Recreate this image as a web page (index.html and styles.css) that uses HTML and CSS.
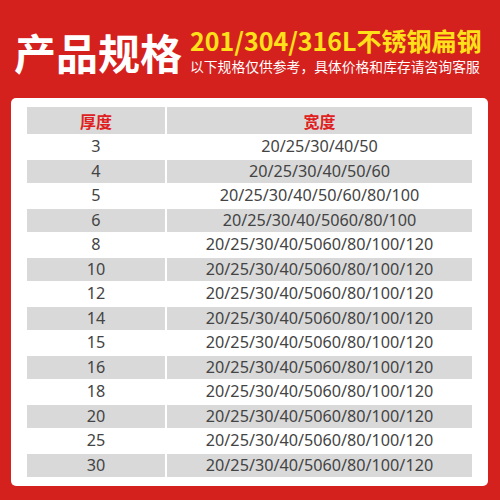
FILE: index.html
```html
<!DOCTYPE html>
<html lang="zh">
<head>
<meta charset="utf-8">
<link rel="stylesheet" href="styles.css">
</head>
<body>
<div class="page">
  <header class="head">
    <h1 class="title">产品规格</h1>
    <div class="info">
      <div class="product">201/304/316L不锈钢扁钢</div>
      <div class="note">以下规格仅供参考，具体价格和库存请咨询客服</div>
    </div>
  </header>
  <main class="card">
    <div class="table">
      <div class="row hd"><div class="c">厚度</div><div class="c">宽度</div></div>
      <div class="row"><div class="c">3</div><div class="c">20/25/30/40/50</div></div>
      <div class="row g"><div class="c">4</div><div class="c">20/25/30/40/50/60</div></div>
      <div class="row"><div class="c">5</div><div class="c">20/25/30/40/50/60/80/100</div></div>
      <div class="row g"><div class="c">6</div><div class="c">20/25/30/40/5060/80/100</div></div>
      <div class="row"><div class="c">8</div><div class="c">20/25/30/40/5060/80/100/120</div></div>
      <div class="row g"><div class="c">10</div><div class="c">20/25/30/40/5060/80/100/120</div></div>
      <div class="row"><div class="c">12</div><div class="c">20/25/30/40/5060/80/100/120</div></div>
      <div class="row g"><div class="c">14</div><div class="c">20/25/30/40/5060/80/100/120</div></div>
      <div class="row"><div class="c">15</div><div class="c">20/25/30/40/5060/80/100/120</div></div>
      <div class="row g"><div class="c">16</div><div class="c">20/25/30/40/5060/80/100/120</div></div>
      <div class="row"><div class="c">18</div><div class="c">20/25/30/40/5060/80/100/120</div></div>
      <div class="row g"><div class="c">20</div><div class="c">20/25/30/40/5060/80/100/120</div></div>
      <div class="row"><div class="c">25</div><div class="c">20/25/30/40/5060/80/100/120</div></div>
      <div class="row g"><div class="c">30</div><div class="c">20/25/30/40/5060/80/100/120</div></div>
    </div>
  </main>
</div>
</body>
</html>
```
FILE: styles.css
```css
html, body {
  margin: 0;
  padding: 0;
}
body {
  background: #d5211e;
  font-family: "Noto Sans", "Noto Sans CJK SC", sans-serif;
}
.page {
  width: 500px;
  height: 500px;
  overflow: hidden;
  padding-top: 28px;
  box-sizing: border-box;
}
.head {
  display: flex;
  align-items: center;
  padding-left: 14px;
  gap: 8px;
  height: 48px;
}
.title {
  margin: 0;
  font-family: "Noto Sans CJK SC", sans-serif;
  font-weight: 700;
  font-size: 42px;
  line-height: 1;
  color: #fff;
}
.info {
  align-self: flex-start;
  margin-top: -1px;
  display: flex;
  flex-direction: column;
  gap: 4px;
}
.product {
  font-family: "Noto Sans CJK SC", sans-serif;
  font-weight: 700;
  font-size: 25px;
  line-height: 27px;
  color: #ffe11a;
}
.note {
  font-family: "Noto Sans CJK SC", sans-serif;
  font-size: 13.8px;
  line-height: 16px;
  color: #fff;
}
.card {
  display: block;
  margin: 22px 0 0 11px;
  width: 477px;
  height: 388px;
  box-sizing: border-box;
  background: #fff;
  border-radius: 5px;
  padding: 9px 16px;
}
.table {
  display: flex;
  flex-direction: column;
  width: 445px;
}
.row {
  display: grid;
  grid-template-columns: 138px 305px;
  column-gap: 2px;
  height: 24.5px;
}
.row.hd {
  height: 27px;
}
.c {
  display: flex;
  align-items: center;
  justify-content: center;
  font-size: 16.2px;
  color: #444;
  line-height: 1;
}
.row.g .c, .row.hd .c {
  background: #d9d9d9;
}
.row.g {
  padding-top: 1px;
  box-sizing: border-box;
}
.row.g .c {
  height: 23.5px;
}
.row.hd .c {
  font-family: "Noto Sans CJK SC", sans-serif;
  font-weight: 700;
  font-size: 16px;
  color: #e02020;
}
```
